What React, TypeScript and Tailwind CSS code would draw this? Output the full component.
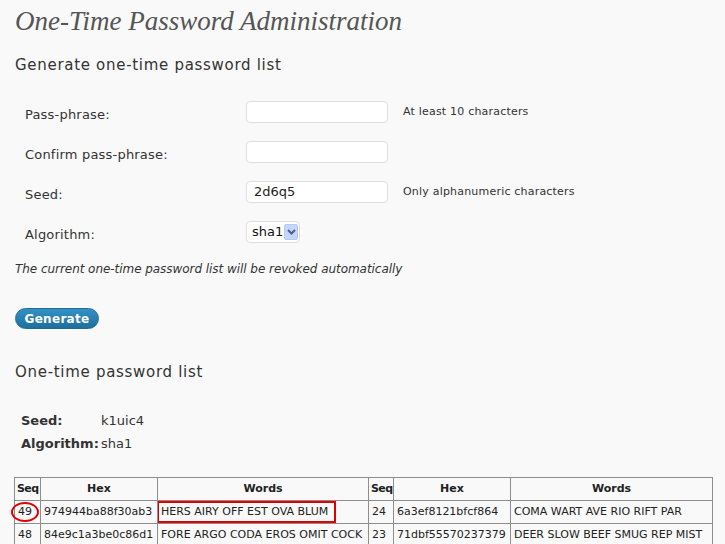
import React from "react"

const rows = [
  { a: "49", ah: "974944ba88f30ab3", aw: "HERS AIRY OFF EST OVA BLUM", b: "24", bh: "6a3ef8121bfcf864", bw: "COMA WART AVE RIO RIFT PAR", mark: true },
  { a: "48", ah: "84e9c1a3be0c86d1", aw: "FORE ARGO CODA EROS OMIT COCK", b: "23", bh: "71dbf55570237379", bw: "DEER SLOW BEEF SMUG REP MIST", mark: false },
]

function Field({ label, value, hint, children }: { label: string; value?: string; hint?: string; children?: React.ReactNode }) {
  return (
    <div className="flex h-[40px] items-center">
      <div className="w-[231px] pl-[10px] pt-[5px] text-[13px] tracking-[0.2px] text-[#333]">{label}</div>
      {children ?? (
        <div className="h-[22px] w-[142px] rounded-[4px] border border-[#dfdfdf] bg-white px-[7px] text-[13px] leading-[20px] text-[#222]">
          {value}
        </div>
      )}
      {hint && <div className="ml-[15px] text-[11px] tracking-[0.2px] text-[#333]">{hint}</div>}
    </div>
  )
}

export default function App() {
  const th = "border border-[#8e8e8e] px-[2px] text-center font-bold"
  const td = "border border-[#8e8e8e] px-[3px] whitespace-nowrap overflow-hidden"
  return (
    <div className="h-[544px] w-[725px] overflow-hidden bg-[#f9f9f9] pl-[15px] font-['DejaVu_Sans',Verdana,sans-serif] text-[#333]">
      <h1 className="h-[42px] font-['Liberation_Serif',Georgia,serif] text-[27px] italic leading-[42px] text-[#555]">
        One-Time Password Administration
      </h1>

      <h2 className="mt-[13px] text-[15px] leading-[20px] tracking-[0.7px] text-[#333]">Generate one-time password list</h2>

      <div className="mt-[17px]">
        <Field label="Pass-phrase:" hint="At least 10 characters" />
        <Field label="Confirm pass-phrase:" />
        <Field label="Seed:" value="2d6q5" hint="Only alphanumeric characters" />
        <Field label="Algorithm:">
          <div className="flex h-[22px] w-[54px] items-center rounded-[4px] border border-[#dfdfdf] bg-white pl-[5px] text-[13px] text-[#111]">
            <span>sha1</span>
            <span className="ml-[1px] flex h-[16px] w-[14px] items-center justify-center rounded-[2px] border border-[#b7c9f0] bg-[#c6d6fb]">
              <svg width="9" height="6" viewBox="0 0 9 6">
                <path d="M1 1l3.5 3.5L8 1" fill="none" stroke="#4d6185" strokeWidth="2" />
              </svg>
            </span>
          </div>
        </Field>
      </div>

      <p className="mt-[9px] text-[12px] italic leading-[16px] tracking-[-0.05px] text-[#333]">
        The current one-time password list will be revoked automatically
      </p>

      <button className="mt-[31px] flex h-[21px] w-[84px] items-center justify-center rounded-full border border-[#1f6d98] bg-gradient-to-b from-[#3391c6] to-[#1f6f9b] text-[12px] font-bold tracking-[0.3px] text-white">
        Generate
      </button>

      <h2 className="mt-[33px] text-[15px] leading-[20px] tracking-[0.7px] text-[#333]">One-time password list</h2>

      <div className="mt-[27px] pl-[6px] text-[13px] text-[#333]">
        <div className="flex h-[23px] items-center">
          <span className="w-[80px] font-bold">Seed:</span>
          <span>k1uic4</span>
        </div>
        <div className="flex h-[23px] items-center">
          <span className="w-[80px] font-bold">Algorithm:</span>
          <span>sha1</span>
        </div>
      </div>

      <table className="ml-[-1px] mt-[22px] w-[699px] table-fixed border-collapse text-[11px] text-[#222]">
        <colgroup>
          <col className="w-[26px]" />
          <col className="w-[117px]" />
          <col className="w-[211px]" />
          <col className="w-[25px]" />
          <col className="w-[117px]" />
          <col />
        </colgroup>
        <thead>
          <tr className="h-[23px]">
            <th className={`${th} tracking-[-0.6px]`}>Seq</th>
            <th className={th}>Hex</th>
            <th className={th}>Words</th>
            <th className={`${th} tracking-[-0.6px]`}>Seq</th>
            <th className={th}>Hex</th>
            <th className={th}>Words</th>
          </tr>
        </thead>
        <tbody>
          {rows.map((r) => (
            <tr key={r.a} className="h-[23px]">
              <td className={`${td} relative overflow-visible`}>
                {r.a}
                {r.mark && <span className="absolute left-[-4px] top-[1px] h-[20px] w-[28px] rounded-[50%] border-2 border-[#e00000]" />}
              </td>
              <td className={td}>{r.ah}</td>
              <td className={`${td} relative`}>
                {r.aw}
                {r.mark && <span className="absolute left-[-1px] top-[0px] h-[22px] w-[179px] border-2 border-[#e00000]" />}
              </td>
              <td className={td}>{r.b}</td>
              <td className={td}>{r.bh}</td>
              <td className={td}>{r.bw}</td>
            </tr>
          ))}
        </tbody>
      </table>
    </div>
  )
}
